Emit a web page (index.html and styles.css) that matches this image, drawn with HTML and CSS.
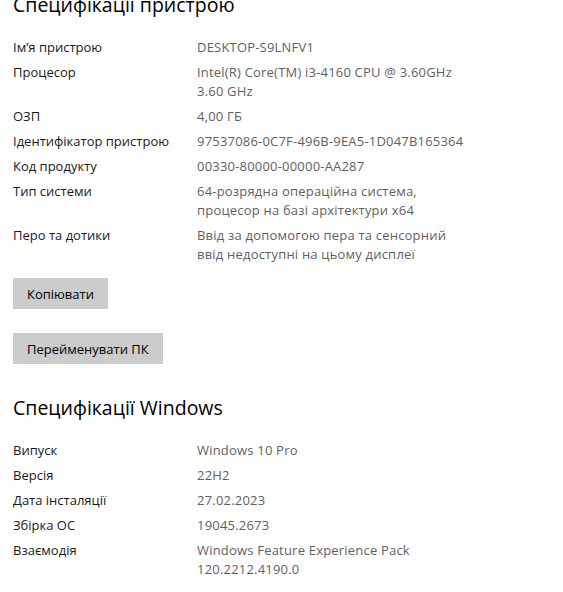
FILE: index.html
```html
<!DOCTYPE html>
<html lang="uk">
<head>
    <meta charset="UTF-8">
    <meta name="viewport" content="width=device-width, initial-scale=1.0">
    <title>Про систему</title>
    <link rel="stylesheet" href="styles.css">
</head>
<body>

    <!-- Специфікації пристрою -->
    <section class="specs specs-device">
        <h2>Специфікації пристрою</h2>
        <div class="spec-list">
            <div class="spec-row"><span class="spec-name">Ім’я пристрою</span><span class="spec-value">DESKTOP-S9LNFV1</span></div>
            <div class="spec-row"><span class="spec-name">Процесор</span><span class="spec-value">Intel(R) Core(TM) i3-4160 CPU @ 3.60GHz<br>3.60 GHz</span></div>
            <div class="spec-row"><span class="spec-name">ОЗП</span><span class="spec-value">4,00 ГБ</span></div>
            <div class="spec-row"><span class="spec-name">Ідентифікатор пристрою</span><span class="spec-value">97537086-0C7F-496B-9EA5-1D047B165364</span></div>
            <div class="spec-row"><span class="spec-name">Код продукту</span><span class="spec-value">00330-80000-00000-AA287</span></div>
            <div class="spec-row"><span class="spec-name">Тип системи</span><span class="spec-value">64-розрядна операційна система,<br>процесор на базі архітектури x64</span></div>
            <div class="spec-row"><span class="spec-name">Перо та дотики</span><span class="spec-value">Ввід за допомогою пера та сенсорний<br>ввід недоступні на цьому дисплеї</span></div>
        </div>
        <div class="actions">
            <button type="button">Копіювати</button>
            <button type="button">Перейменувати ПК</button>
        </div>
    </section>

    <!-- Специфікації Windows -->
    <section class="specs specs-windows">
        <h2>Специфікації Windows</h2>
        <div class="spec-list">
            <div class="spec-row"><span class="spec-name">Випуск</span><span class="spec-value">Windows 10 Pro</span></div>
            <div class="spec-row"><span class="spec-name">Версія</span><span class="spec-value">22H2</span></div>
            <div class="spec-row"><span class="spec-name">Дата інсталяції</span><span class="spec-value">27.02.2023</span></div>
            <div class="spec-row"><span class="spec-name">Збірка ОС</span><span class="spec-value">19045.2673</span></div>
            <div class="spec-row"><span class="spec-name">Взаємодія</span><span class="spec-value">Windows Feature Experience Pack<br>120.2212.4190.0</span></div>
        </div>
    </section>

</body>
</html>
```

FILE: styles.css
```css
/* Загальні стилі */
body {
    margin: 0;
    padding: 0 13px;
    background: #fff;
    color: #000;
    font-family: "Open Sans", "Noto Sans", sans-serif;
    font-size: 13px;
}

.specs h2 {
    margin: 0;
    font-size: 19.5px;
    font-weight: normal;
    line-height: 28px;
    color: #000;
}

.specs-device {
    margin-top: -9px;
}

.specs-windows h2 {
    margin-top: 30px;
}

/* Список характеристик */
.spec-list {
    margin-top: 19px;
}

.spec-row {
    display: grid;
    grid-template-columns: 184px 1fr;
    line-height: 19px;
    margin-bottom: 6px;
}

.spec-name {
    color: #1a1a1a;
}

.spec-value {
    color: #5f5f5f;
    letter-spacing: 0.2px;
}

/* Кнопки */
.actions {
    display: flex;
    flex-direction: column;
    align-items: flex-start;
    gap: 24px;
    margin-top: 14px;
}

.actions button {
    height: 31px;
    padding: 0 14px;
    background: #cccccc;
    border: none;
    color: #000;
    font-family: inherit;
    font-size: 13px;
}
```
